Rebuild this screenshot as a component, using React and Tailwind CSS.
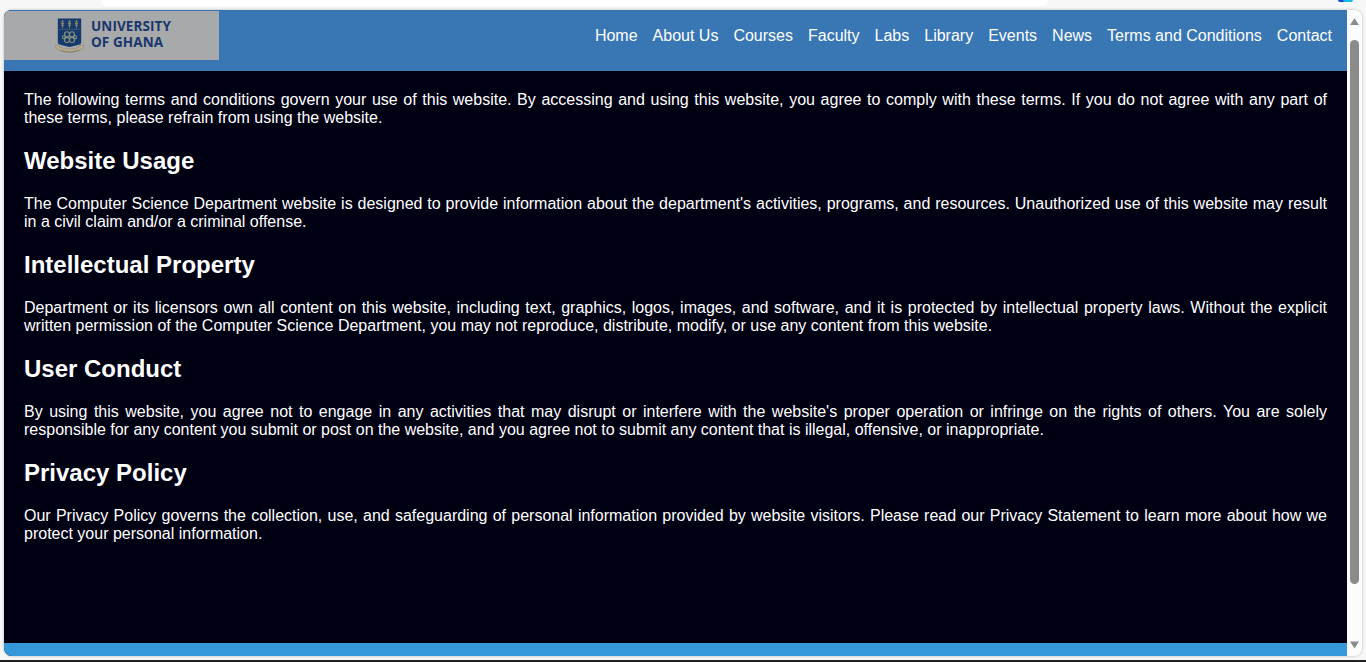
const links = ["Home", "About Us", "Courses", "Faculty", "Labs", "Library", "Events", "News", "Terms and Conditions", "Contact"];

const intro =
  "The following terms and conditions govern your use of this website. By accessing and using this website, you agree to comply with these terms. If you do not agree with any part of these terms, please refrain from using the website.";

const sections = [
  ["Website Usage", "The Computer Science Department website is designed to provide information about the department's activities, programs, and resources. Unauthorized use of this website may result in a civil claim and/or a criminal offense."],
  ["Intellectual Property", "Department or its licensors own all content on this website, including text, graphics, logos, images, and software, and it is protected by intellectual property laws. Without the explicit written permission of the Computer Science Department, you may not reproduce, distribute, modify, or use any content from this website."],
  ["User Conduct", "By using this website, you agree not to engage in any activities that may disrupt or interfere with the website's proper operation or infringe on the rights of others. You are solely responsible for any content you submit or post on the website, and you agree not to submit any content that is illegal, offensive, or inappropriate."],
  ["Privacy Policy", "Our Privacy Policy governs the collection, use, and safeguarding of personal information provided by website visitors. Please read our Privacy Statement to learn more about how we protect your personal information."],
];

function Crest() {
  return (
    <svg width="30" height="36" viewBox="0 0 30 36" className="shrink-0">
      <path d="M2.8 1.4H26.2V25.5Q26.2 27.4 23 28L14.5 30L6 28Q2.8 27.4 2.8 25.5Z" fill="#173a6d" />
      <path d="M3 12.5H26" stroke="#566472" strokeWidth="0.5" />
      <g stroke="#89866c" strokeWidth="0.8" fill="#89866c">
        {[7.5, 14.5, 21.5].map((x) => (
          <g key={x} transform={`translate(${x} 0)`}>
            <path d="M0 3V11.5" />
            <path d="M0 3L1.2 5H-1.2ZM-1.7 5.8H1.7L1 7.4H-1ZM-1.4 8H1.4L0 10Z" strokeWidth="0.2" />
          </g>
        ))}
      </g>
      <g fill="none" stroke="#85917f" strokeWidth="1.1">
        <circle cx="12" cy="17.3" r="2.5" />
        <circle cx="17" cy="17.3" r="2.5" />
        <circle cx="12" cy="23" r="2.5" />
        <circle cx="17" cy="23" r="2.5" />
        <path d="M9 20.2H20" />
        <circle cx="9.2" cy="20.2" r="1.7" />
        <circle cx="19.8" cy="20.2" r="1.7" />
      </g>
      <path d="M0.3 28.5L4 28.3L5 30.5Q14.5 33.7 24 30.5L25 28.3L28.9 28.5L27.7 32L24.3 33.2Q14.5 37.5 4.7 33.2L1.4 32Z" fill="#b8ac92" stroke="#8b7b62" strokeWidth="0.5" />
      <path d="M5.5 33.4Q14.5 36.6 23.5 33.4" fill="none" stroke="#75664f" strokeWidth="0.6" />
    </svg>
  );
}

function Scrollbar() {
  return (
    <div className="flex w-[15px] shrink-0 flex-col items-center bg-[#fcfcfc] pt-[8px] pb-[7px]">
      <svg width="9" height="7" viewBox="0 0 9 7"><path d="M4.5 .2L9 7H0Z" fill="#8b8b8b" /></svg>
      <div className="mt-[15px] h-[544px] w-[9px] rounded-full bg-[#8b8b8b]" />
      <svg className="mt-auto" width="9" height="8" viewBox="0 0 9 8"><path d="M0 .6H9L4.5 7.6Z" fill="#8b8b8b" /></svg>
    </div>
  );
}

export default function App() {
  return (
    <div className="flex h-[662px] w-[1366px] flex-col overflow-hidden bg-[#f7f7f7] font-['Liberation_Sans',Arial,sans-serif] text-base leading-[18px] text-white">
      <div className="flex h-[10px] shrink-0 items-start">
        <div className="ml-[101px] h-[6px] w-[947px] rounded-b-[12px] bg-white" />
        <div className="ml-[290px] h-[2px] w-[15px] rounded-b-full bg-linear-to-r from-[#1c45cf] from-30% to-[#12b9ec] to-40%" />
      </div>
      <div className="mx-[4px] flex h-[646px] shrink-0 overflow-hidden rounded-[8px] shadow-[0_0_3px_rgba(0,0,0,0.28)]">
        <div className="flex w-[1343px] shrink-0 flex-col bg-[#000013]">
          <header className="flex h-[61px] shrink-0 items-start justify-between bg-[#3876b4] pt-px pr-[15px]">
            <div className="flex h-[49px] w-[215px] bg-[#a7a9aa] pt-[6px] pl-[51px]">
              <Crest />
              <div className="pt-px pl-[6px] font-['Open_Sans','Noto_Sans',sans-serif] text-[13.5px] leading-[16px] font-bold tracking-[0.1px] text-[#19376c]">
                <div className="whitespace-nowrap">UNIVERSITY</div>
                <div className="whitespace-nowrap">OF GHANA</div>
              </div>
            </div>
            <nav className="flex gap-[15px] pt-[16px]">
              {links.map((link) => (
                <a key={link} className="whitespace-nowrap">{link}</a>
              ))}
            </nav>
          </header>
          <main className="flex-1 p-5 text-justify">
            <p>{intro}</p>
            {sections.map(([title, body]) => (
              <section key={title}>
                <h2 className="my-5 text-2xl leading-7 font-bold">{title}</h2>
                <p>{body}</p>
              </section>
            ))}
          </main>
          <footer className="h-[13px] shrink-0 bg-[#3498db]" />
        </div>
        <Scrollbar />
      </div>
      <div className="mt-auto h-[2px] shrink-0 bg-[#202020]" />
    </div>
  );
}
